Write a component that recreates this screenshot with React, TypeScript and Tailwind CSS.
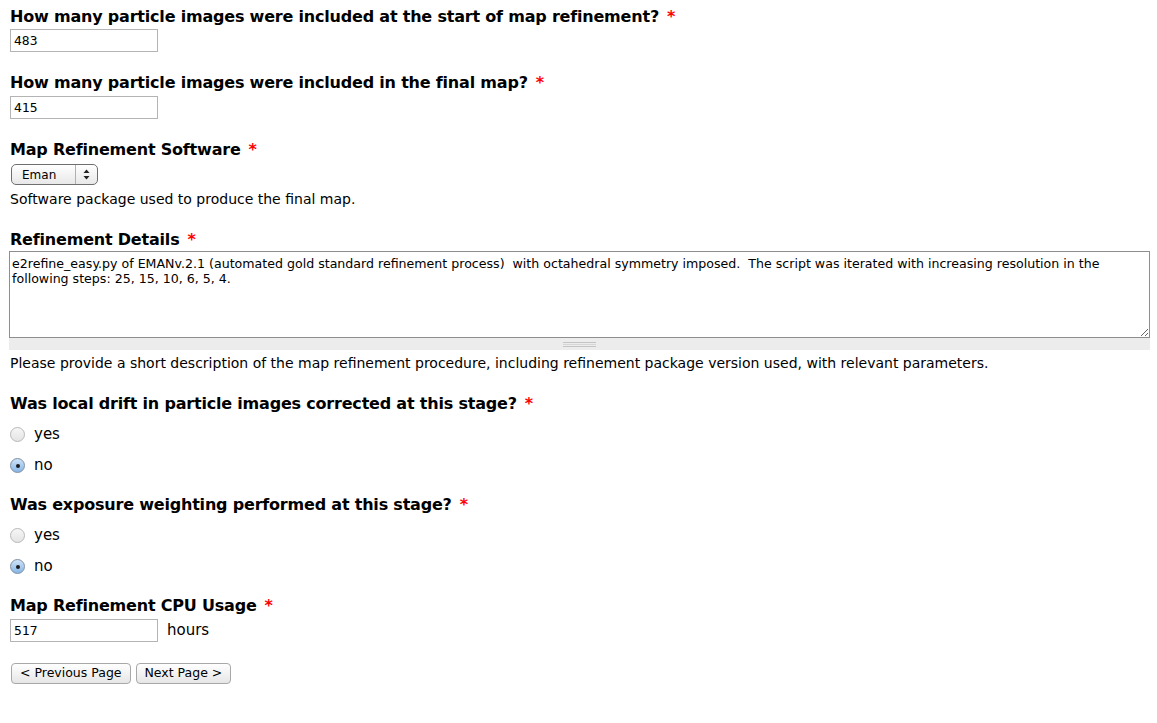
import { useState } from 'react'

const Star = () => <span className="text-[#ff0000] ml-[8px]">*</span>

function Label({ children, className = '' }: { children: React.ReactNode; className?: string }) {
  return (
    <div className={'h-[20px] pt-[1px] font-bold text-[16px] leading-[20px] tracking-[-0.2px] text-black whitespace-nowrap ' + className}>
      {children}
      <Star />
    </div>
  )
}

function TextBox({ value }: { value: string }) {
  return (
    <input
      defaultValue={value}
      className="block w-[148px] h-[23px] border border-[#b4b4b4] bg-white px-[3px] text-[13px] text-black outline-none"
      style={{ fontFamily: "'DejaVu Sans Mono', monospace" }}
    />
  )
}

function Radio({ label, checked, onPick }: { label: string; checked: boolean; onPick: () => void }) {
  return (
    <div className="flex items-center h-[31px] cursor-default" onClick={onPick}>
      <span
        className={
          checked
            ? 'w-[15px] h-[15px] rounded-full border border-[#7c8ea4] bg-gradient-to-b from-[#cfe3f8] to-[#87b6e6] flex items-center justify-center'
            : 'w-[15px] h-[15px] rounded-full border border-[#b8b8b8] bg-gradient-to-b from-[#f6f6f6] to-[#e4e4e4]'
        }
      >
        {checked && <span className="w-[4px] h-[4px] rounded-full bg-[#1a1a1a]" />}
      </span>
      <span className="ml-[9px] text-[15px] text-black">{label}</span>
    </div>
  )
}

function YesNo({ initial }: { initial: string }) {
  const [v, setV] = useState(initial)
  return (
    <div className="mt-[6px]">
      <Radio label="yes" checked={v === 'yes'} onPick={() => setV('yes')} />
      <Radio label="no" checked={v === 'no'} onPick={() => setV('no')} />
    </div>
  )
}

function Button({ children }: { children: React.ReactNode }) {
  return (
    <button className="h-[21px] px-[8px] rounded-[4px] border border-[#a8a8a8] bg-gradient-to-b from-white to-[#e6e6e6] text-[12.5px] text-black leading-none">
      {children}
    </button>
  )
}

export default function App() {
  return (
    <div
      className="bg-white min-h-[723px] pl-[10px] pr-[8px] pt-[6px] text-black"
      style={{ fontFamily: "'DejaVu Sans', Verdana, sans-serif" }}
    >
      {/* particle counts */}
      <Label>How many particle images were included at the start of map refinement?</Label>
      <div className="mt-[3px]">
        <TextBox value="483" />
      </div>

      <Label className="mt-[20px]">How many particle images were included in the final map?</Label>
      <div className="mt-[4px]">
        <TextBox value="415" />
      </div>

      {/* software */}
      <Label className="mt-[20px]">Map Refinement Software</Label>
      <div className="mt-[5px] ml-[1px] w-[87px] h-[21px] rounded-[5px] border border-[#6f6f6f] bg-gradient-to-b from-white to-[#e8e8e8] flex items-center text-[12px]">
        <span className="flex-1 pl-[10px]">Eman</span>
        <span className="w-[22px] h-full border-l border-[#b0b0b0] flex items-center justify-center">
          <svg width="7" height="11" viewBox="0 0 7 11">
            <path d="M3.5 0.5 L6.5 4 L0.5 4 Z" fill="#222" />
            <path d="M3.5 10.5 L6.5 7 L0.5 7 Z" fill="#222" />
          </svg>
        </span>
      </div>
      <div className="mt-[5px] h-[18px] text-[14px] leading-[18px]">Software package used to produce the final map.</div>

      {/* refinement details */}
      <Label className="mt-[21px]">Refinement Details</Label>
      <div className="mt-[2px] w-[1141px] ml-[-1px]">
        <textarea
          defaultValue="e2refine_easy.py of EMANv.2.1 (automated gold standard refinement process)  with octahedral symmetry imposed.  The script was iterated with increasing resolution in the following steps: 25, 15, 10, 6, 5, 4."
          className="block w-full h-[87px] border border-[#8e8e8e] bg-white px-[2px] pt-[4px] text-[12.6px] leading-[15px] text-black outline-none resize-y"
          style={{ fontFamily: "'DejaVu Sans', sans-serif" }}
        />
        <div className="h-[12px] bg-[#ececec] flex items-center justify-center">
          <div className="w-[33px] flex flex-col gap-[1px]">
            <div className="h-[1px] bg-[#c4c4c4]" />
            <div className="h-[1px] bg-[#d6d6d6]" />
            <div className="h-[1px] bg-[#c4c4c4]" />
          </div>
        </div>
      </div>
      <div className="mt-[4px] h-[18px] text-[14px] leading-[18px]">
        Please provide a short description of the map refinement procedure, including refinement package version used, with relevant parameters.
      </div>

      {/* drift / exposure */}
      <Label className="mt-[21px]">Was local drift in particle images corrected at this stage?</Label>
      <YesNo initial="no" />

      <Label className="mt-[13px]">Was exposure weighting performed at this stage?</Label>
      <YesNo initial="no" />

      {/* cpu */}
      <Label className="mt-[13px]">Map Refinement CPU Usage</Label>
      <div className="mt-[4px] flex items-center">
        <TextBox value="517" />
        <span className="ml-[9px] text-[15px]">hours</span>
      </div>

      <div className="mt-[21px] ml-[1px] flex gap-[5px]">
        <Button>&lt; Previous Page</Button>
        <Button>Next Page &gt;</Button>
      </div>
    </div>
  )
}
